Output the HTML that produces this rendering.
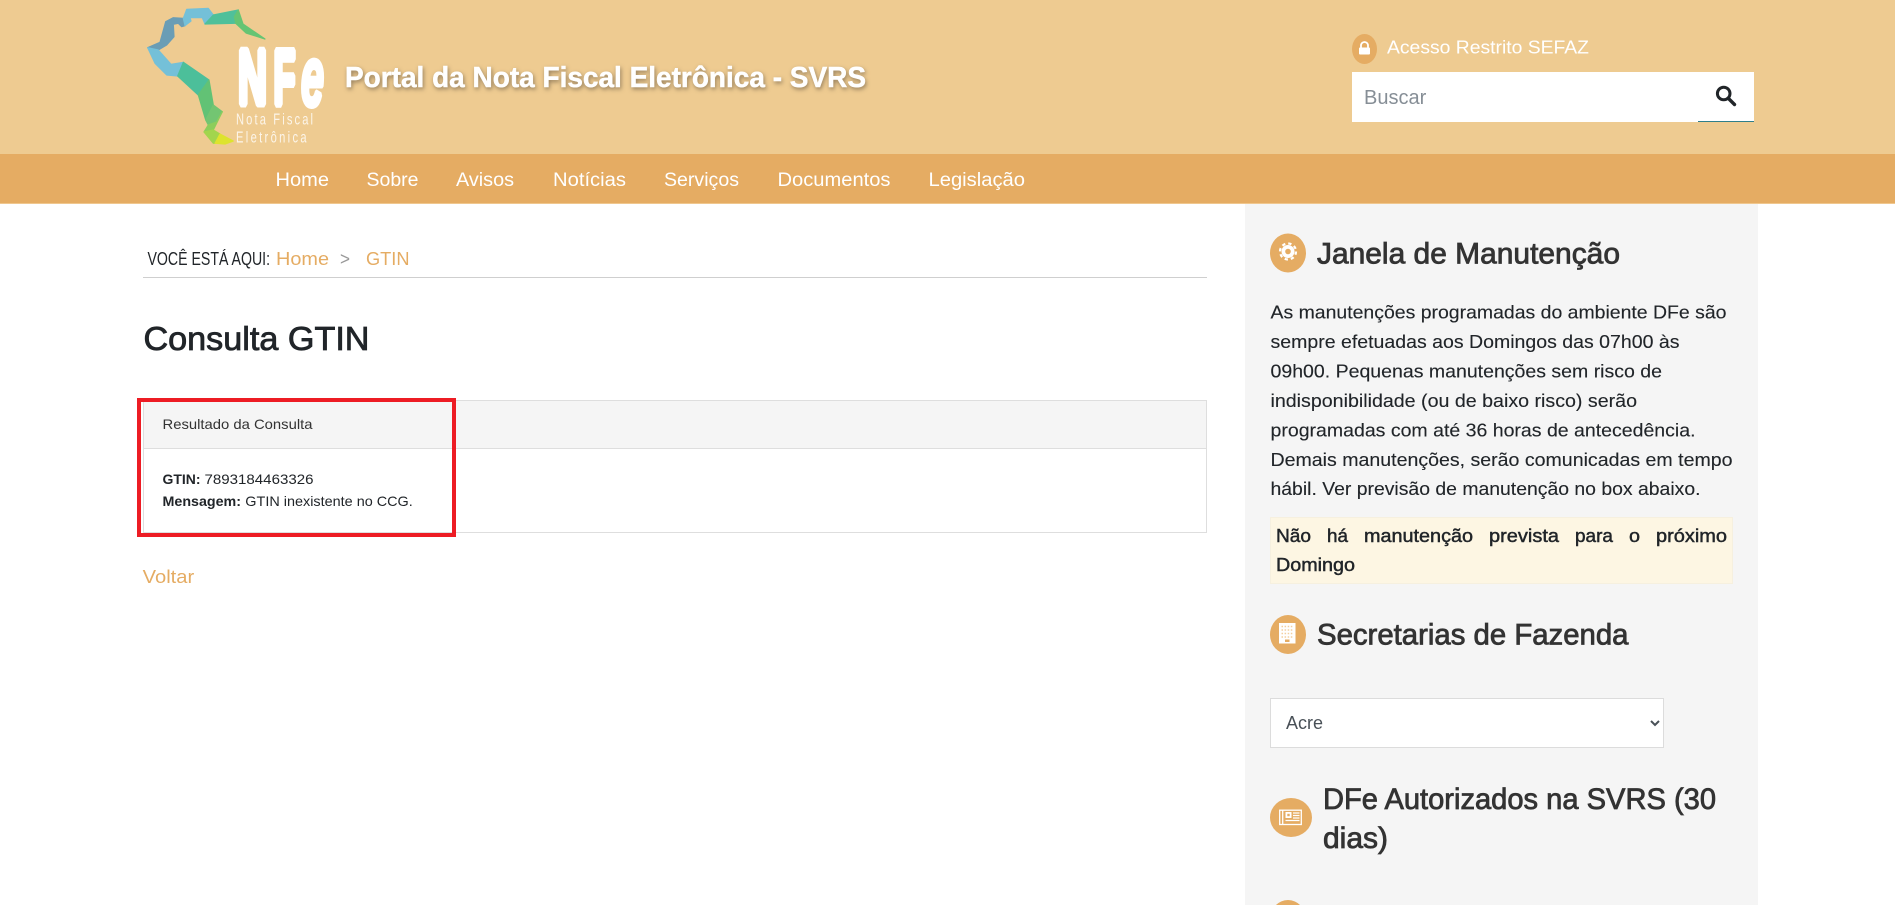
<!DOCTYPE html>
<html lang="pt-BR">
<head>
<meta charset="utf-8">
<title>Consulta GTIN - Portal da Nota Fiscal Eletrônica - SVRS</title>
<style>
html,body{margin:0;padding:0;width:1895px;height:905px;overflow:hidden;background:#fff}
body{position:relative;font-family:"Liberation Sans",sans-serif}
.b{position:absolute;display:block;box-sizing:border-box}
svg{position:absolute;left:0;top:0}
svg text{font-family:"Liberation Sans",sans-serif;white-space:pre}
.med{stroke:currentColor;stroke-width:.45px}
.hd{stroke:currentColor;stroke-width:.8px}
input,select{font-family:"Liberation Sans",sans-serif;outline:0;border-radius:0}
input::placeholder{color:#868e96;opacity:1}
</style>
</head>
<body>
<header class="b" style="left:0;top:0;width:1895px;height:154px;background:#eecb91"></header>
<nav class="b" style="left:0;top:154px;width:1895px;height:50px;background:#e5ac63;border-bottom:1px solid #f0c78e"></nav>
<aside class="b" style="left:1245px;top:204px;width:513px;height:701px;background:#f5f5f5"></aside>
<div class="b" style="left:143px;top:277px;width:1064px;height:1px;background:#cfcfcf"></div>
<section class="b" style="left:143px;top:400px;width:1064px;height:133px;border:1px solid #dedede;background:#fff"></section>
<div class="b" style="left:144px;top:401px;width:1062px;height:48px;background:#f5f5f5;border-bottom:1px solid #dedede"></div>
<div class="b" style="left:137px;top:398px;width:319px;height:139px;border:4px solid #ed1c24;z-index:3"></div>
<div class="b" style="left:1270px;top:517px;width:463px;height:67px;background:#fdf6e3;border:1px solid #f6f0df"></div>
<input class="b" placeholder="Buscar" style="left:1352px;top:73px;width:402px;height:49px;border:0;background:#fff;padding:1px 0 0 12px;font-size:20px">
<div class="b" style="left:1352px;top:72px;width:402px;height:1px;background:#fff"></div>
<div class="b" style="left:1698px;top:121px;width:56px;height:1px;background:#2f7f8a"></div>
<select class="b" style="left:1270px;top:698px;width:394px;height:50px;border:1px solid #dcdcdc;background:#fff;color:#495057;font-size:18px;padding:0 8px 0 11px"><option>Acre</option></select>

<svg width="1895" height="905" viewBox="0 0 1895 905" xmlns="http://www.w3.org/2000/svg" style="z-index:2;pointer-events:none">
  <!-- logo -->
  <g stroke-width="1.200" stroke-linejoin="round">
    <polygon fill="#6a9db5" stroke="#6a9db5" points="147.700,47.700 160,42.300 165.700,21.700 173.300,17.700 183.300,18.300 185,25.700 181.700,26.700 178.300,23.300 173.300,24.300 174,36.700 166.700,45 158.300,50"/>
    <polygon fill="#74c0d8" stroke="#74c0d8" points="183.300,18.300 186.700,9.300 208.300,8.300 213.300,15 205,24 202.300,17.700 190,17.700 191,21 185,25.700"/>
    <polygon fill="#4fc09a" stroke="#4fc09a" points="213.300,15 238.300,10 234.300,16.700 235.700,23.300 205,24"/>
    <polygon fill="#66c473" stroke="#66c473" points="238.300,10 234.300,16.700 235.700,23.300 246,33 265,39 243,24"/>
    <polygon fill="#74c0d8" stroke="#74c0d8" points="147.700,47.700 158.300,50 171,64.300 183.300,62.300 177.700,76 166.700,75 155,63.300"/>
    <polygon fill="#4cbf9a" stroke="#4cbf9a" points="183.300,62.300 209,80 198.300,95 177.700,76"/>
    <polygon fill="#62c275" stroke="#62c275" points="209,80 213.300,105 205.700,120 198.300,95"/>
    <polygon fill="#73c572" stroke="#73c572" points="213.300,105 222.300,111.700 216.700,122 208.300,125 205.700,120"/>
    <polygon fill="#8ccd5b" stroke="#8ccd5b" points="222.300,111.700 213.300,130 204,132 208.300,125 216.700,122"/>
    <polygon fill="#a2d54d" stroke="#a2d54d" points="204,132 213.300,130 220,134 215,143.300 213.300,143.300"/>
    <polygon fill="#dde32e" stroke="#dde32e" points="220,134 233.300,141 225,144 215,143.300"/>
  </g>
  <g fill="#fff" stroke="#fff" stroke-linejoin="bevel">
    <text x="238" y="104" font-size="78" font-weight="700" stroke-width="7" textLength="29" lengthAdjust="spacingAndGlyphs">N</text>
    <text x="273.500" y="104" font-size="78" font-weight="700" stroke-width="7" textLength="22" lengthAdjust="spacingAndGlyphs">F</text>
    <text x="301" y="105.500" font-size="84" font-weight="700" font-style="italic" stroke-width="5" textLength="23" lengthAdjust="spacingAndGlyphs">e</text>
  </g>
  <text transform="translate(236 124.500) scale(.72 1)" font-size="15.500" fill="#fff" fill-opacity=".8" textLength="107" lengthAdjust="spacing">Nota Fiscal</text>
  <text transform="translate(236 142.500) scale(.72 1)" font-size="15.500" fill="#fff" fill-opacity=".8" textLength="98" lengthAdjust="spacing">Eletrônica</text>

  <!-- title -->
  <text x="345" y="87" font-size="29" font-weight="700" fill="#fff" stroke="#fff" stroke-width=".5" textLength="521" lengthAdjust="spacingAndGlyphs" style="filter:drop-shadow(1px 2px 2px rgba(60,50,40,.5))">Portal da Nota Fiscal Eletrônica - SVRS</text>

  <!-- restricted access -->
  <ellipse cx="1364.500" cy="49" rx="12.500" ry="15" fill="#e5ac63"/>
  <path d="M1361 48v-2.500a3.500 3.500 0 0 1 7 0V48" fill="none" stroke="#fff" stroke-width="1.800"/>
  <rect x="1359" y="47.500" width="11" height="7" rx="1" fill="#fff"/>
  <text x="1387" y="53.500" font-size="18.500" fill="#fff" textLength="202" lengthAdjust="spacingAndGlyphs">Acesso Restrito SEFAZ</text>

  <!-- search icon -->
  <circle cx="1723.700" cy="93.500" r="6.300" fill="none" stroke="#212529" stroke-width="3"/>
  <path d="M1729 99l5.500 5.500" stroke="#212529" stroke-width="3.400" stroke-linecap="round"/>

  <!-- nav -->
  <g font-size="19" fill="#fff">
    <text x="275.500" y="186" textLength="53.500" lengthAdjust="spacingAndGlyphs">Home</text>
    <text x="366.500" y="186" textLength="52" lengthAdjust="spacingAndGlyphs">Sobre</text>
    <text x="456" y="186" textLength="58" lengthAdjust="spacingAndGlyphs">Avisos</text>
    <text x="553" y="186" textLength="73" lengthAdjust="spacingAndGlyphs">Notícias</text>
    <text x="664" y="186" textLength="75" lengthAdjust="spacingAndGlyphs">Serviços</text>
    <text x="777.500" y="186" textLength="113" lengthAdjust="spacingAndGlyphs">Documentos</text>
    <text x="928.500" y="186" textLength="96.500" lengthAdjust="spacingAndGlyphs">Legislação</text>
  </g>

  <!-- breadcrumb -->
  <text x="147.500" y="265" font-size="18" fill="#212529" textLength="122.500" lengthAdjust="spacingAndGlyphs">VOCÊ ESTÁ AQUI:</text>
  <text x="276" y="265" font-size="18" fill="#e5ac63" textLength="53" lengthAdjust="spacingAndGlyphs">Home</text>
  <text x="340" y="265" font-size="18" fill="#999" textLength="10" lengthAdjust="spacingAndGlyphs">&gt;</text>
  <text x="366" y="265" font-size="18" fill="#e5ac63" textLength="43.500" lengthAdjust="spacingAndGlyphs">GTIN</text>

  <!-- page title -->
  <text x="143.500" y="350" font-size="33" class="hd" fill="#212529" color="#212529" textLength="226" lengthAdjust="spacingAndGlyphs">Consulta GTIN</text>

  <!-- panel -->
  <text x="162.500" y="429" font-size="14" fill="#333" textLength="150" lengthAdjust="spacingAndGlyphs">Resultado da Consulta</text>
  <text x="162.500" y="484" font-size="14" font-weight="700" fill="#212529" textLength="38" lengthAdjust="spacingAndGlyphs">GTIN:</text>
  <text x="204.500" y="484" font-size="14" fill="#212529" textLength="109" lengthAdjust="spacingAndGlyphs">7893184463326</text>
  <text x="162.500" y="506" font-size="14" font-weight="700" fill="#212529" textLength="78.500" lengthAdjust="spacingAndGlyphs">Mensagem:</text>
  <text x="245.300" y="506" font-size="14" fill="#212529" textLength="167.500" lengthAdjust="spacingAndGlyphs">GTIN inexistente no CCG.</text>
  <text x="142.700" y="583" font-size="18" fill="#e5ac63" textLength="51.500" lengthAdjust="spacingAndGlyphs">Voltar</text>

  <!-- sidebar: Janela -->
  <ellipse cx="1288" cy="253" rx="18" ry="19.500" fill="#e5ac63"/>
  <circle cx="1288" cy="251.500" r="6.500" fill="#fff"/>
  <circle cx="1288" cy="251.500" r="8" fill="none" stroke="#fff" stroke-width="2.200" stroke-dasharray="3.300 2.980"/>
  <circle cx="1288" cy="251.500" r="2.800" fill="#e5ac63"/>
  <text x="1317" y="263.500" font-size="29.500" class="hd" fill="#333" color="#333" textLength="303" lengthAdjust="spacingAndGlyphs">Janela de Manutenção</text>

  <g font-size="18" fill="#212529" stroke="#212529" stroke-width=".12">
    <text x="1270.500" y="318.500" textLength="456" lengthAdjust="spacingAndGlyphs">As manutenções programadas do ambiente DFe são</text>
    <text x="1270.500" y="348" textLength="409" lengthAdjust="spacingAndGlyphs">sempre efetuadas aos Domingos das 07h00 às</text>
    <text x="1270.500" y="377.500" textLength="391.500" lengthAdjust="spacingAndGlyphs">09h00. Pequenas manutenções sem risco de</text>
    <text x="1270.500" y="407" textLength="366.500" lengthAdjust="spacingAndGlyphs">indisponibilidade (ou de baixo risco) serão</text>
    <text x="1270.500" y="436.500" textLength="425" lengthAdjust="spacingAndGlyphs">programadas com até 36 horas de antecedência.</text>
    <text x="1270.500" y="466" textLength="462" lengthAdjust="spacingAndGlyphs">Demais manutenções, serão comunicadas em tempo</text>
    <text x="1270.500" y="495" textLength="430" lengthAdjust="spacingAndGlyphs">hábil. Ver previsão de manutenção no box abaixo.</text>
  </g>

  <g font-size="18" class="med" fill="#212529" color="#212529">
    <text x="1276" y="542" textLength="35" lengthAdjust="spacingAndGlyphs">Não</text>
    <text x="1327" y="542" textLength="21" lengthAdjust="spacingAndGlyphs">há</text>
    <text x="1364" y="542" textLength="109" lengthAdjust="spacingAndGlyphs">manutenção</text>
    <text x="1489" y="542" textLength="70" lengthAdjust="spacingAndGlyphs">prevista</text>
    <text x="1575" y="542" textLength="38" lengthAdjust="spacingAndGlyphs">para</text>
    <text x="1629" y="542" textLength="11" lengthAdjust="spacingAndGlyphs">o</text>
    <text x="1656" y="542" textLength="71" lengthAdjust="spacingAndGlyphs">próximo</text>
    <text x="1276" y="571" textLength="79" lengthAdjust="spacingAndGlyphs">Domingo</text>
  </g>

  <!-- sidebar: Secretarias -->
  <ellipse cx="1288" cy="634.500" rx="18" ry="19.500" fill="#e5ac63"/>
  <rect x="1279" y="623" width="16.500" height="20.500" fill="#fff"/>
  <path d="M1281.500 626.500h12M1281.500 630h12M1281.500 633.500h12M1281.500 637h12" stroke="#f3cf9f" stroke-width="1.500" stroke-dasharray="1.500 1.600"/>
  <rect x="1285" y="639.500" width="4.500" height="2.500" fill="#e5ac63"/>
  <text x="1317" y="644.700" font-size="29.500" class="hd" fill="#333" color="#333" textLength="311.500" lengthAdjust="spacingAndGlyphs">Secretarias de Fazenda</text>

  <!-- sidebar: DFe -->
  <ellipse cx="1291" cy="817.500" rx="21" ry="19.500" fill="#e5ac63"/>
  <rect x="1279.700" y="810.200" width="21.600" height="14.300" fill="none" stroke="#fff" stroke-width="1.300"/>
  <path d="M1282.700 810.200v14.300" stroke="#fff" stroke-width="1.300"/>
  <rect x="1285.500" y="812" width="6" height="6" fill="#fff"/>
  <rect x="1287.300" y="813.800" width="2.400" height="2.400" fill="#e5ac63"/>
  <path d="M1293 813h6.500M1293 815.500h6.500M1293 818h6.500M1285.500 820.500h14" stroke="#fff" stroke-width="1.200"/>
  <text x="1323" y="809" font-size="29.500" class="hd" fill="#333" color="#333" textLength="393" lengthAdjust="spacingAndGlyphs">DFe Autorizados na SVRS (30</text>
  <text x="1323" y="848" font-size="29.500" class="hd" fill="#333" color="#333" textLength="65" lengthAdjust="spacingAndGlyphs">dias)</text>

  <ellipse cx="1288" cy="919.500" rx="18" ry="19.500" fill="#e5ac63"/>
</svg>
</body>
</html>
